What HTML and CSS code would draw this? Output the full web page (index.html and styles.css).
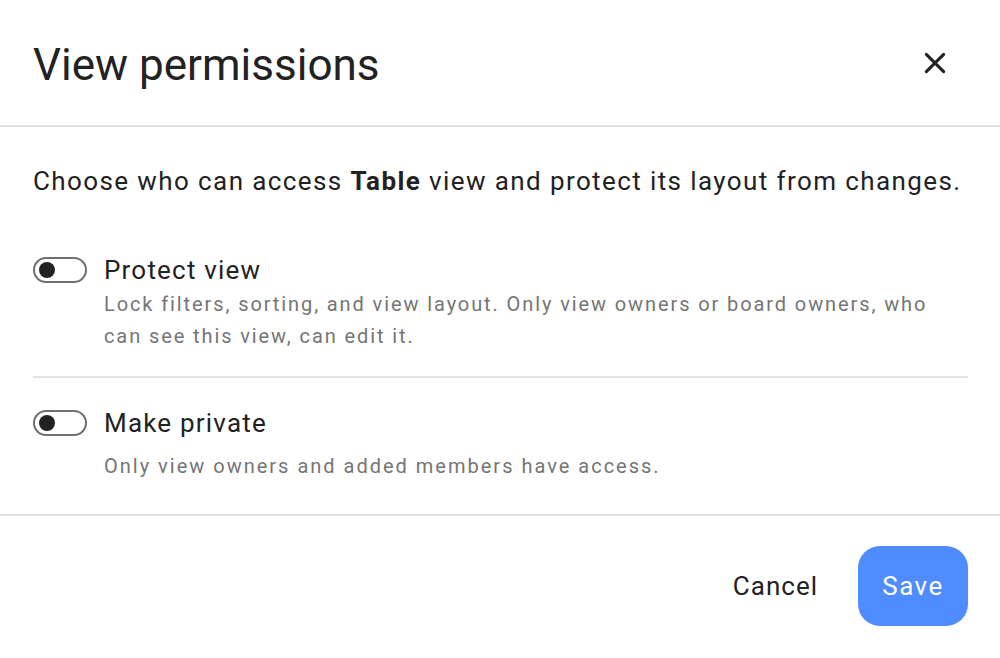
FILE: index.html
```html
<!DOCTYPE html>
<html lang="en">
<head>
  <meta charset="UTF-8">
  <title>View permissions</title>
  <link rel="stylesheet" href="styles.css">
</head>
<body>

  <div class="dialog">
    <div class="dialog-header">
      <h1>View permissions</h1>
      <button class="close-btn" aria-label="Close">
        <svg width="26" height="26" viewBox="0 0 24 24">
          <path d="M4 4L20 20M20 4L4 20" stroke="#222" stroke-width="2.8" stroke-linecap="round"/>
        </svg>
      </button>
    </div>

    <div class="dialog-body">
      <p class="intro">Choose who can access <b>Table</b> view and protect its layout from changes.</p>

      <div class="option">
        <span class="toggle"><span class="knob"></span></span>
        <div class="option-text">
          <div class="option-title">Protect view</div>
          <div class="option-hint">Lock filters, sorting, and view layout. Only view owners or board owners, who can see this view, can edit it.</div>
        </div>
      </div>

      <div class="option option-last">
        <span class="toggle"><span class="knob"></span></span>
        <div class="option-text">
          <div class="option-title">Make private</div>
          <div class="option-hint">Only view owners and added members have access.</div>
        </div>
      </div>
    </div>

    <div class="dialog-footer">
      <button class="btn-cancel">Cancel</button>
      <button class="btn-save">Save</button>
    </div>
  </div>

</body>
</html>
```

FILE: styles.css
```css
body {
  margin: 0;
  font-family: Roboto, "Noto Sans", sans-serif;
  background: #fff;
  color: #222;
}

.dialog {
  width: 1000px;
}

.dialog-header {
  display: flex;
  align-items: center;
  justify-content: space-between;
  height: 125px;
  padding: 0 33px;
  border-bottom: 2px solid #e2e2e4;
}

.dialog-header h1 {
  margin: 0;
  padding-top: 5px;
  font-size: 44px;
  font-weight: 400;
  color: #222;
}

.close-btn {
  display: flex;
  border: none;
  background: none;
  padding: 0;
  margin-right: 19px;
  cursor: pointer;
}

.dialog-body {
  padding: 0 32px 0 33px;
  border-bottom: 2px solid #e2e2e4;
}

.intro {
  margin: 0;
  padding: 38px 0 57px;
  font-size: 26px;
  line-height: 32px;
  letter-spacing: 1.4px;
}

.intro b {
  font-weight: 700;
}

.option {
  display: flex;
  gap: 17px;
  padding-bottom: 24px;
  border-bottom: 2px solid #e2e2e4;
}

.option + .option {
  padding-top: 29px;
}

.option-last {
  border-bottom: none;
  padding-bottom: 32px;
}

.toggle {
  flex: none;
  position: relative;
  width: 50px;
  height: 22px;
  margin-top: 3px;
  border: 2px solid #6f6f6f;
  border-radius: 14px;
}

.knob {
  position: absolute;
  left: 4px;
  top: 3px;
  width: 16px;
  height: 16px;
  border-radius: 50%;
  background: #222;
}

.option-title {
  font-size: 26px;
  line-height: 32px;
  letter-spacing: 1.2px;
}

.option-hint {
  margin-top: 2px;
  font-size: 20px;
  line-height: 32px;
  letter-spacing: 1.9px;
  color: #757575;
}

.option-last .option-hint {
  margin-top: 11px;
  letter-spacing: 2px;
}

.dialog-footer {
  display: flex;
  justify-content: flex-end;
  align-items: center;
  gap: 34px;
  padding: 30px 32px;
}

.btn-cancel {
  border: none;
  background: none;
  font-family: inherit;
  font-size: 26px;
  letter-spacing: 1px;
  color: #222;
  cursor: pointer;
}

.btn-save {
  width: 110px;
  height: 80px;
  border: none;
  border-radius: 22px;
  background: #4f8cff;
  color: #fff;
  font-family: inherit;
  font-size: 26px;
  letter-spacing: 1.5px;
  cursor: pointer;
}
```
